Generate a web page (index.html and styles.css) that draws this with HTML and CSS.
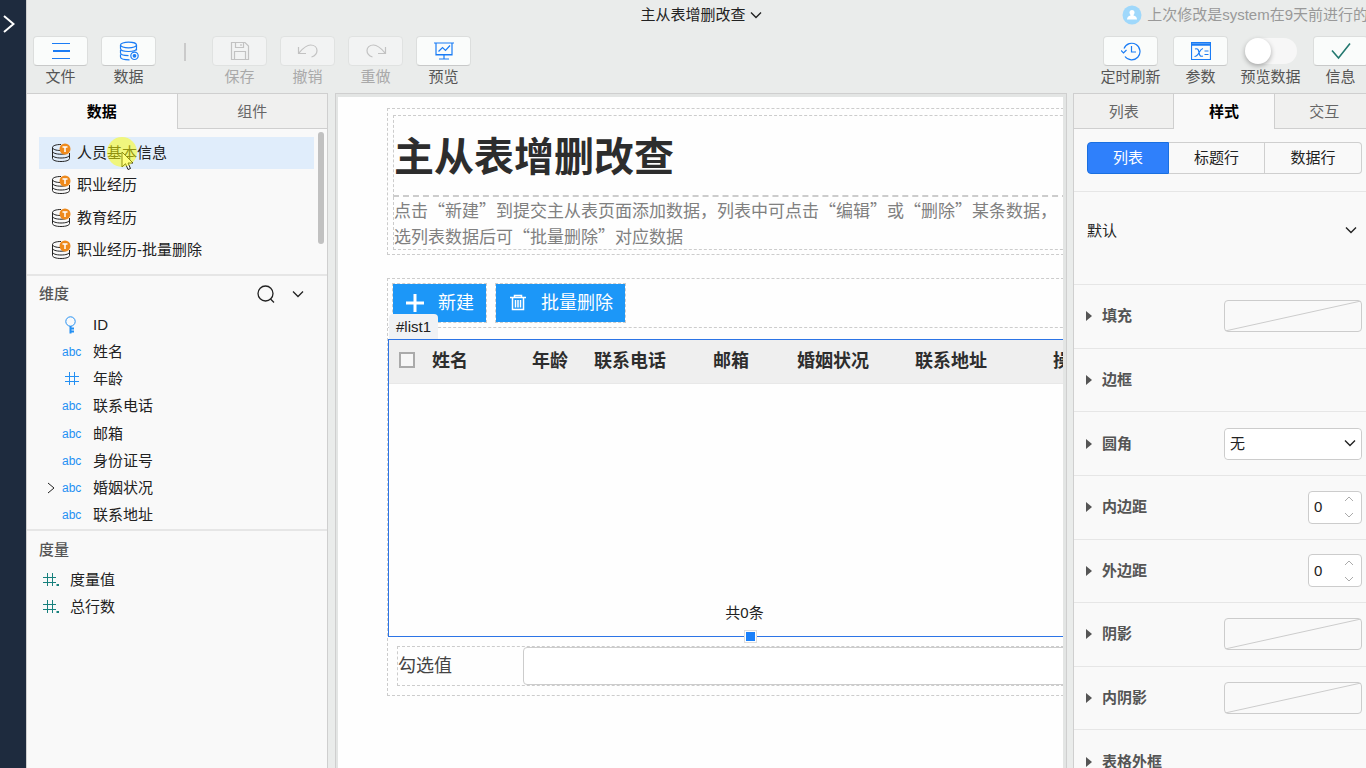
FILE: index.html
```html
<!DOCTYPE html>
<html lang="zh-CN">
<head>
  <meta charset="UTF-8">
  <meta name="viewport" content="width=device-width, initial-scale=1.0">
  <title>主从表增删改查</title>
  <link rel="stylesheet" href="styles.css">
</head>
<body>
  <!-- shared icons -->
  <svg class="sprite" width="0" height="0" aria-hidden="true">
    <symbol id="i-down" viewBox="0 0 12 8"><path d="M1 1.5l5 5 5-5"/></symbol>
    <symbol id="i-dataset" viewBox="0 0 20 20">
      <path d="M10 1.5C5 1.500 1.500 2.700 1.500 4.500S5 7.500 9.500 7.500M1.500 4.500v11c0 1.800 3.500 3 8.500 3s8.500-1.200 8.500-3V10M1.500 8.200c0 1.800 3.500 3 8.500 3 2 0 4-.2 5.500-.7M1.500 12c0 1.800 3.500 3 8.500 3s8.500-1.200 8.500-3"/>
      <circle cx="14" cy="6" r="5.500" fill="#ee8a1d" stroke="none"/>
      <path d="M11.500 4h5M14 4v5" stroke="#fff" stroke-width="1.500"/>
    </symbol>
    <symbol id="i-hash" viewBox="0 0 14 14"><path d="M4.500 0v13M9.500 0v13M0 4.500h14M0 9.500h14"/></symbol>
    <symbol id="i-hashdot" viewBox="0 0 17 14"><path d="M4.500 0v13M9.500 0v13M0 4.500h13M0 9.500h13"/><path d="M13.500 12h2.500" stroke-width="2"/></symbol>
  </svg>

  <nav class="rail">
    <button class="rail-open" aria-label="展开">
      <svg width="12" height="18" viewBox="0 0 12 18"><path d="M1 1l9.500 8L1 17"/></svg>
    </button>
  </nav>

  <div class="app">
    <header class="header">
      <div class="titlebar">
        <button class="doc-name">主从表增删改查 <svg class="down" width="12" height="8"><use href="#i-down"/></svg></button>
        <div class="last-edit">
          <svg width="20" height="20" viewBox="0 0 20 20"><circle cx="10" cy="10" r="9.500" fill="#9fd8fb"/><circle cx="10" cy="7.500" r="2.500" fill="#fff"/><path d="M8.500 8h3v2.500c2 .5 3.500 1.500 3.500 4H5c0-2.500 1.500-3.500 3.500-4z" fill="#fff"/></svg>
          <span>上次修改是system在9天前进行的</span>
        </div>
      </div>

      <div class="toolbar">
        <div class="tools">
          <button class="tool">
            <span class="tool-box"><svg width="20" height="20" viewBox="0 0 20 20"><path d="M1 2.500h18M1 17.500h18"/><path d="M2 10h17" stroke-width="2"/></svg></span>
            文件
          </button>
          <button class="tool">
            <span class="tool-box"><svg width="20" height="20" viewBox="0 0 20 20"><ellipse cx="9.500" cy="4" rx="8" ry="2.800"/><path d="M1.500 4v3.500c0 1.700 3.500 3 8 3s8-1.300 8-3V4M1.500 9v3c0 1.500 3 2.500 8 2.700M17.500 8v1.500M1.500 13.500V16c0 1.500 3.500 2.800 9 2.800"/><circle cx="15.500" cy="14.800" r="3.700"/><circle cx="15.500" cy="14.800" r="1.300" fill="#1a7cf5"/></svg></span>
            数据
          </button>
          <span class="tool-sep"></span>
          <button class="tool" disabled>
            <span class="tool-box"><svg width="20" height="20" viewBox="0 0 20 20"><path d="M1.500 1.500H15L18.500 5v13.500h-17zM5.500 1.500v5h8v-5M11 3v2M4.500 18.500v-8h11v8"/></svg></span>
            保存
          </button>
          <button class="tool" disabled>
            <span class="tool-box"><svg width="22" height="20" viewBox="0 0 22 20"><path d="M1.500 6v6.500H9M2 12c3-3.500 6.500-8 11.500-8 4 0 6.500 2.500 6.500 5.500 0 3.500-2.500 5.500-5.500 6.500"/></svg></span>
            撤销
          </button>
          <button class="tool" disabled>
            <span class="tool-box"><svg width="22" height="20" viewBox="0 0 22 20"><path d="M20.500 6v6.500H13M20 12c-3-3.500-6.500-8-11.500-8C4.500 4 2 6.500 2 9.500 2 13 4.500 15 7.500 16"/></svg></span>
            重做
          </button>
          <button class="tool">
            <span class="tool-box"><svg width="20" height="20" viewBox="0 0 20 20"><path d="M0 2h20M2 2v12h16V2M10 14v4M5 18h10"/><path d="M4.500 10.500l4-4 3 3 4.500-5M2 13.500h16"/></svg></span>
            预览
          </button>
        </div>

        <div class="tools tools-right">
          <button class="tool">
            <span class="tool-box"><svg width="20" height="20" viewBox="0 0 20 20"><path d="M3 7.500A8.300 8.300 0 1 1 4 15.500M0 9.500l2.500 2.500L5.500 9M10.500 5v6H15"/></svg></span>
            定时刷新
          </button>
          <button class="tool">
            <span class="tool-box"><svg width="20" height="20" viewBox="0 0 20 20"><path d="M.5 1.500h19v17H.5z"/><path d="M0 3.500h20" stroke-width="2.500"/><path d="M4 8c3-1 3.500 1 4 3.500s1 4.500 4 3.500M12 7.500c-4 .5-4 8-8.500 8M13.500 10h4M13.500 13.500h4"/></svg></span>
            参数
          </button>
          <label class="tool">
            <input class="switch" type="checkbox">
            预览数据
          </label>
          <button class="tool">
            <span class="tool-box ok"><svg width="20" height="18" viewBox="0 0 20 18"><path d="M1 8.500l6.500 7.500L19 1.500"/></svg></span>
            信息
          </button>
        </div>
      </div>
    </header>

    <main class="workspace">
      <!-- data panel -->
      <aside class="panel">
        <div class="tabs">
          <button class="tab active">数据</button>
          <button class="tab">组件</button>
        </div>
        <section class="datasets">
          <ul class="dataset-list">
            <li class="selected"><svg width="20" height="20"><use href="#i-dataset"/></svg>人员基本信息</li>
            <li><svg width="20" height="20"><use href="#i-dataset"/></svg>职业经历</li>
            <li><svg width="20" height="20"><use href="#i-dataset"/></svg>教育经历</li>
            <li><svg width="20" height="20"><use href="#i-dataset"/></svg>职业经历-批量删除</li>
          </ul>
          <span class="scroll-thumb"></span>
          <svg class="pointer" width="13" height="20" viewBox="0 0 13 20"><path d="M1 1v15l3.500-3.300L7 18.500l2.500-1L7 12h5z"/></svg>
          <span class="pointer-halo"></span>
        </section>
        <section class="dimensions">
          <div class="section-head">
            <h2>维度</h2>
            <button aria-label="搜索"><svg width="18" height="18" viewBox="0 0 18 18"><circle cx="8.500" cy="8.500" r="7.500"/><path d="M13.500 14l3.500 3.500"/></svg></button>
            <button aria-label="更多"><svg class="down" width="12" height="8"><use href="#i-down"/></svg></button>
          </div>
          <ul class="field-list">
            <li><i></i><b><svg width="18" height="18" viewBox="0 0 18 18"><circle cx="8.500" cy="5.500" r="4.700"/><path d="M8.500 10v7.500M9 12.500h3M9 15.500h3" stroke-width="2"/></svg></b>ID</li>
            <li><i></i><b>abc</b>姓名</li>
            <li><i></i><b class="num"><svg width="14" height="14"><use href="#i-hash"/></svg></b>年龄</li>
            <li><i></i><b>abc</b>联系电话</li>
            <li><i></i><b>abc</b>邮箱</li>
            <li><i></i><b>abc</b>身份证号</li>
            <li><i><svg width="8" height="12" viewBox="0 0 8 12"><path d="M1 1l6 5-6 5"/></svg></i><b>abc</b>婚姻状况</li>
            <li><i></i><b>abc</b>联系地址</li>
          </ul>
        </section>
        <section class="measures">
          <h2>度量</h2>
          <ul>
            <li><svg width="17" height="14"><use href="#i-hashdot"/></svg>度量值</li>
            <li><svg width="17" height="14"><use href="#i-hashdot"/></svg>总行数</li>
          </ul>
        </section>
      </aside>

      <!-- design canvas -->
      <div class="canvas">
        <div class="page">
          <section class="block intro">
            <h1>主从表增删改查</h1>
            <p>点击“新建”到提交主从表页面添加数据，列表中可点击“编辑”或“删除”某条数据，<br>选列表数据后可“批量删除”对应数据</p>
          </section>

          <section class="block content">
            <div class="actions">
              <button class="action"><svg width="18" height="18" viewBox="0 0 18 18"><path d="M9 0v18M0 9h18" stroke-width="3"/></svg>新建</button>
              <button class="action"><svg width="18" height="18" viewBox="0 0 18 18"><path d="M1 3.500h16M5.500 3.500v-2h7v2M3.500 3.500v12h11v-12M6.500 6v7.500M9 6v7.500M11.500 6v7.500" stroke-width="1.500"/></svg>批量删除</button>
            </div>
            <div class="list">
              <span class="list-tag">#list1</span>
              <table>
                <thead>
                  <tr>
                    <th class="c-check"><input type="checkbox" aria-label="全选"></th>
                    <th class="c-name">姓名</th>
                    <th class="c-age">年龄</th>
                    <th class="c-phone">联系电话</th>
                    <th class="c-mail">邮箱</th>
                    <th class="c-marry">婚姻状况</th>
                    <th class="c-addr">联系地址</th>
                    <th>操作</th>
                  </tr>
                </thead>
              </table>
              <div class="list-foot">共0条</div>
              <span class="handle"></span>
            </div>
            <div class="field">
              <label for="checked">勾选值</label>
              <input id="checked" type="text">
            </div>
          </section>
        </div>
      </div>

      <!-- style panel -->
      <aside class="panel">
        <div class="tabs">
          <button class="tab">列表</button>
          <button class="tab active">样式</button>
          <button class="tab">交互</button>
        </div>
        <div class="segments">
          <button class="active">列表</button>
          <button>标题行</button>
          <button>数据行</button>
        </div>
        <div class="preset">
          <div class="select plain">
            <select aria-label="预设样式"><option>默认</option></select>
            <svg class="down" width="12" height="8"><use href="#i-down"/></svg>
          </div>
        </div>
        <div class="props">
          <div class="prop"><button class="fold">填充</button><button class="swatch" aria-label="填充"><svg viewBox="0 0 136 30" preserveAspectRatio="none"><path d="M0 30L136 0"/></svg></button></div>
          <div class="prop"><button class="fold">边框</button></div>
          <div class="prop">
            <button class="fold">圆角</button>
            <div class="select">
              <select aria-label="圆角"><option>无</option></select>
              <svg class="down" width="12" height="8"><use href="#i-down"/></svg>
            </div>
          </div>
          <div class="prop">
            <button class="fold">内边距</button>
            <div class="stepper"><input type="number" value="0" aria-label="内边距"><svg width="10" height="22" viewBox="0 0 10 22"><path d="M1 5l4-4 4 4M1 17l4 4 4-4"/></svg></div>
          </div>
          <div class="prop">
            <button class="fold">外边距</button>
            <div class="stepper"><input type="number" value="0" aria-label="外边距"><svg width="10" height="22" viewBox="0 0 10 22"><path d="M1 5l4-4 4 4M1 17l4 4 4-4"/></svg></div>
          </div>
          <div class="prop"><button class="fold">阴影</button><button class="swatch" aria-label="阴影"><svg viewBox="0 0 136 30" preserveAspectRatio="none"><path d="M0 30L136 0"/></svg></button></div>
          <div class="prop"><button class="fold">内阴影</button><button class="swatch" aria-label="内阴影"><svg viewBox="0 0 136 30" preserveAspectRatio="none"><path d="M0 30L136 0"/></svg></button></div>
          <div class="prop"><button class="fold">表格外框</button></div>
        </div>
      </aside>
    </main>
  </div>
</body>
</html>
```
FILE: styles.css
```css
* {
  box-sizing: border-box;
}

body {
  margin: 0;
  display: flex;
  height: 100vh;
  overflow: hidden;
  background: #eaeceb;
  color: #222;
  font-family: "Liberation Sans", "Noto Sans CJK SC", sans-serif;
  font-size: 15px;
  line-height: 20px;
}

button, input, select {
  font: inherit;
  color: inherit;
}

button {
  padding: 0;
  border: 0;
  background: none;
  cursor: pointer;
}

h1, h2, p, ul {
  margin: 0;
  padding: 0;
  list-style: none;
}

svg {
  fill: none;
  stroke: currentColor;
  flex: none;
}

.sprite {
  position: absolute;
}

.rail {
  width: 26px;
  flex: none;
  background: #1e2b3e;
  color: #fff;
}

.rail-open {
  display: block;
  padding: 15px 3px;
}

.rail-open svg {
  display: block;
  stroke-width: 2;
}

.app {
  flex: 1;
  min-width: 0;
  margin-right: -9px;
  display: flex;
  flex-direction: column;
  border-left: 1px solid #cfcfcf;
}

/* header */
.header {
  height: 93px;
  flex: none;
}

.titlebar {
  display: grid;
  grid-template-columns: 1fr auto 1fr;
  align-items: center;
  height: 30px;
}

.doc-name {
  grid-column: 2;
  display: flex;
  align-items: center;
  gap: 4px;
}

.last-edit {
  display: flex;
  align-items: center;
  justify-self: end;
  gap: 5px;
  padding-right: 7px;
  color: #999;
  white-space: nowrap;
}

.last-edit svg {
  stroke: none;
}

.down {
  stroke-width: 1.4;
}

.toolbar {
  display: flex;
  justify-content: space-between;
  padding: 6px 5px 0 6px;
}

.tools {
  display: flex;
  gap: 13px;
}

.tools-right {
  gap: 15px;
  padding-right: 2px;
}

.tool {
  display: flex;
  flex-direction: column;
  align-items: center;
  gap: 1px;
  width: 55px;
  color: #555;
  white-space: nowrap;
}

.tool-box {
  display: flex;
  align-items: center;
  justify-content: center;
  width: 55px;
  height: 30px;
  border: 1px solid #dcdedd;
  border-bottom-color: #c8c9c9;
  border-radius: 4px;
  background: #fafcfb;
  color: #1a7cf5;
  stroke-width: 1.2;
}

.tool:disabled {
  color: #a9a9a9;
}

.tool:disabled .tool-box {
  border-color: #e0e2e1;
  background: #f2f3f3;
  color: #c2c2c2;
}

.tool-box.ok {
  color: #23786f;
  stroke-width: 1.6;
}

.tool-sep {
  width: 2px;
  height: 18px;
  margin: 7px 13px 0 15px;
  background: #cacaca;
}

.switch {
  appearance: none;
  width: 52px;
  height: 26px;
  margin: 2px 0;
  border-radius: 13px;
  background: #f7f7f7;
}

.switch::before {
  content: "";
  display: block;
  width: 26px;
  height: 26px;
  border-radius: 50%;
  background: #fff;
  box-shadow: 0 2px 5px rgba(0, 0, 0, 0.3);
}

/* three columns under the header */
.workspace {
  flex: 1;
  min-height: 0;
  display: grid;
  grid-template-columns: 301px minmax(0, 1fr) 302px;
  gap: 6px;
}

.panel {
  display: flex;
  flex-direction: column;
  overflow: hidden;
  border: 1px solid #cfcfcf;
  border-bottom: 0;
  background: #f9f9f9;
}

.workspace > .panel:first-child {
  border-left: 0;
}

.tabs {
  display: flex;
  height: 35px;
  flex: none;
}

.tab {
  flex: 1;
  padding-top: 1px;
  border-bottom: 1px solid #cfcfcf;
  background: #f0f0ef;
  color: #666;
}

.tab + .tab {
  border-left: 1px solid #cfcfcf;
}

.tab.active {
  border-bottom: 0;
  background: #f9f9f9;
  color: #000;
  font-weight: bold;
}

.datasets {
  position: relative;
  height: 147px;
  flex: none;
  padding: 8px 13px 8px 12px;
  border-bottom: 2px solid #e6e6e6;
}

.dataset-list {
  display: grid;
  grid-auto-rows: 1fr;
  height: 100%;
}

.dataset-list li {
  display: flex;
  align-items: center;
  gap: 6px;
  padding-left: 12px;
}

.dataset-list .selected {
  background: #e0edfb;
}

.scroll-thumb {
  position: absolute;
  top: 3px;
  right: 3px;
  width: 6px;
  height: 112px;
  border-radius: 3px;
  background: #c1c1c1;
}

.pointer {
  position: absolute;
  top: 22px;
  left: 94px;
  fill: #fff;
  stroke: #222;
}

.pointer-halo {
  position: absolute;
  top: 8px;
  left: 80px;
  width: 30px;
  height: 30px;
  border-radius: 50%;
  background: rgba(255, 255, 0, 0.5);
}

h2 {
  color: #555;
  font-size: 15px;
  font-weight: 500;
}

.dimensions {
  display: flex;
  flex-direction: column;
  height: 255px;
  flex: none;
  border-bottom: 2px solid #e6e6e6;
}

.section-head {
  display: flex;
  align-items: center;
  gap: 17px;
  height: 35px;
  flex: none;
  padding: 0 23px 0 12px;
}

.section-head h2 {
  flex: 1;
}

.section-head svg {
  display: block;
  stroke-width: 1.3;
}

.field-list {
  flex: 1;
  display: grid;
  grid-auto-rows: 1fr;
}

.field-list li {
  display: grid;
  grid-template-columns: 15px 31px auto;
  align-items: center;
  padding-left: 20px;
}

.field-list b {
  color: #2490f3;
  font-size: 12px;
  font-weight: normal;
}

.field-list svg {
  display: block;
}

.field-list .num {
  padding-left: 3px;
}

.measures {
  padding: 9px 12px;
}

.measures ul {
  padding-top: 6px;
}

.measures li {
  display: flex;
  align-items: center;
  gap: 10px;
  height: 27px;
  padding-left: 4px;
}

.measures svg {
  color: #17807d;
}

/* canvas */
.canvas {
  overflow: hidden;
  margin-left: 1px;
  padding: 3px 3px 0 2px;
  border: 1px solid #cfcfcf;
  border-bottom: 0;
  background: #e3e5e4;
}

.page {
  height: 100%;
  padding: 11px 0 0 49px;
  overflow: hidden;
  background: #fefefe;
}

/* wider than the visible area, like the published page */
.block {
  width: 727px;
  border: 1px dashed #ccc;
}

.intro {
  padding: 6px 5px 4px;
}

.intro h1 {
  padding-top: 4px;
  border: 1px dashed #ccc;
  border-bottom-width: 2px;
  color: #2d2d2d;
  font-size: 40px;
  line-height: 75px;
}

.intro p {
  border: 1px dashed #ccc;
  border-top: 0;
  color: #808080;
  font-family: "Noto Sans CJK SC", sans-serif;
  font-size: 17px;
  line-height: 26px;
  white-space: nowrap;
}

.content {
  margin-top: 23px;
}

.actions {
  display: flex;
  gap: 8px;
  height: 49px;
  padding: 4px;
  border-bottom: 1px dashed #ccc;
}

.action {
  display: flex;
  align-items: center;
  gap: 14px;
  height: 40px;
  padding: 0 12px 0 13px;
  border: 1px dashed #ccc;
  background: #1c97f8;
  background-clip: padding-box;
  color: #fff;
  font-size: 18px;
}

.list {
  position: relative;
  display: flex;
  flex-direction: column;
  height: 298px;
  margin-top: 11px;
  border: 1px solid #2c74e6;
}

.list-tag {
  position: absolute;
  top: -26px;
  left: 0;
  height: 25px;
  padding: 0 7px;
  border-radius: 4px 4px 0 0;
  background: #f0f2f5;
  line-height: 25px;
}

table {
  width: 100%;
  table-layout: fixed;
  border-collapse: collapse;
}

th {
  height: 43px;
  padding: 0;
  border-bottom: 1px solid #e8e8e8;
  background: #efefef;
  color: #2d2d2d;
  font-size: 18px;
  text-align: left;
  white-space: nowrap;
}

.c-check { width: 43px; }
.c-name { width: 100px; }
.c-age { width: 62px; }
.c-phone { width: 119px; }
.c-mail { width: 84px; }
.c-marry { width: 118px; }
.c-addr { width: 138px; }

th input {
  appearance: none;
  display: block;
  width: 16px;
  height: 16px;
  margin: 0 0 2px 10px;
  border: 2px solid #aaa;
  background: #f6f6f6;
}

.list-foot {
  margin-top: auto;
  padding: 0 12px 13px 0;
  text-align: center;
}

.handle {
  position: absolute;
  bottom: -6px;
  left: calc(50% - 6px);
  width: 11px;
  height: 11px;
  border: 1px solid #fff;
  outline: 1px solid #ddd;
  background: #1a80fa;
}

.field {
  display: flex;
  margin: 9px;
  border: 1px dashed #ccc;
  color: #444;
  font-size: 18px;
}

.field label {
  width: 125px;
  line-height: 38px;
}

.field input {
  flex: 1;
  height: 38px;
  border: 1px solid #ccc;
  border-radius: 4px;
  background: #fff;
}

/* style panel */
.segments {
  display: grid;
  grid-template-columns: 82fr 96fr 97fr;
  margin: 13px 12px 17px 13px;
}

.segments button {
  height: 32px;
  border: 1px solid #cfcfcf;
  border-left: 0;
}

.segments button:last-child {
  border-radius: 0 4px 4px 0;
}

.segments .active {
  border: 1px solid #1a6fe0;
  border-radius: 4px 0 0 4px;
  background: #2f80fb;
  color: #fff;
}

.preset {
  height: 93px;
  flex: none;
  padding: 24px 12px 0 13px;
  border-top: 1px solid #e6e6e6;
}

.props {
  display: grid;
  grid-auto-rows: 1fr;
  height: 509px;
  flex: none;
}

.prop {
  display: flex;
  align-items: center;
  justify-content: space-between;
  padding: 0 12px;
  border-top: 1px solid #e6e6e6;
}

.fold {
  display: flex;
  align-items: center;
  gap: 10px;
  color: #555;
  font-weight: bold;
}

.fold::before {
  content: "";
  border: 5px solid transparent;
  border-left: 6px solid #555;
  border-right: 0;
}

.swatch,
.prop .select {
  width: 138px;
  height: 32px;
  border: 1px solid #ccc;
  border-radius: 4px;
}

.swatch svg {
  display: block;
  width: 100%;
  height: 100%;
  color: #ccc;
}

.select {
  position: relative;
}

.select select {
  appearance: none;
  width: 100%;
  height: 30px;
  padding: 0 24px 0 5px;
  border: 0;
  border-radius: 4px;
  background: #fff;
}

.plain select {
  padding-left: 0;
  background: none;
}

.select svg {
  position: absolute;
  top: 10px;
  right: 5px;
  pointer-events: none;
}

.stepper {
  display: flex;
  align-items: center;
  justify-content: space-between;
  width: 54px;
  height: 33px;
  padding: 0 7px 0 5px;
  border: 1px solid #ccc;
  border-radius: 4px;
  background: #fff;
}

.stepper input {
  appearance: textfield;
  width: 24px;
  padding: 0;
  border: 0;
  background: none;
}

.stepper input::-webkit-inner-spin-button {
  appearance: none;
}

.stepper svg {
  color: #aaa;
}
```
